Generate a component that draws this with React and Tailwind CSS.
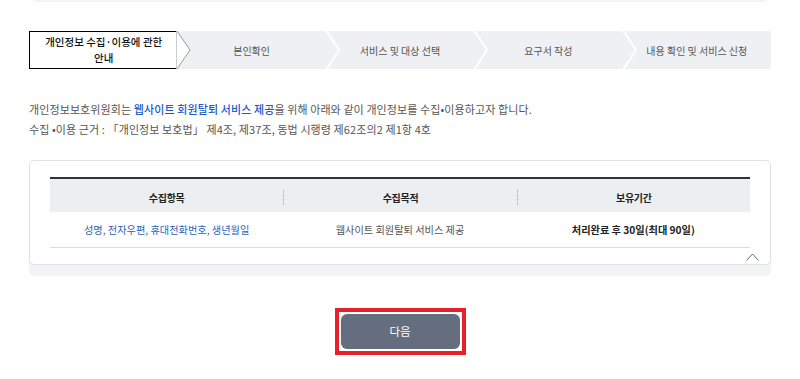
import React from 'react';

const steps = [
  '본인확인',
  '서비스 및 대상 선택',
  '요구서 작성',
  '내용 확인 및 서비스 신청',
];

const Chevron = ({ first }) => (
  <svg
    className="absolute left-[-1px] top-0 h-[38px] w-[16px] z-10"
    viewBox="0 0 16 38"
    fill="none"
  >
    {first ? (
      <polygon points="0,0 1,0 14,19 1,38 0,38" fill="#ffffff" stroke="#9a9a9a" strokeWidth="1" />
    ) : (
      <polyline points="1,-1 14,19 1,39" stroke="#ffffff" strokeWidth="2" />
    )}
  </svg>
);

export default function App() {
  return (
    <div
      className="w-[800px] h-[379px] bg-white overflow-hidden"
      style={{ fontFamily: '"Noto Sans CJK KR", "Noto Sans", sans-serif' }}
    >
      <div className="mx-[33px] h-[2px] bg-[#f3f4f5] rounded-b" />

      {/* Stepper */}
      <div className="mx-[29px] mt-[29px] grid grid-cols-5 h-[38px] bg-[#eef0f3] rounded-r-[2px]">
        <div className="flex items-center justify-center bg-white border-l border-y border-black text-[10.5px] leading-[16px] font-medium text-[#111] text-center">
          <div>
            개인정보 수집·이용에 관한
            <br />
            안내
          </div>
        </div>
        {steps.map((s, i) => (
          <div
            key={s}
            className="relative flex items-center justify-center text-[10px] text-[#555]"
          >
            <Chevron first={i === 0} />
            <span>{s}</span>
          </div>
        ))}
      </div>

      {/* Description */}
      <div className="mx-[29px] mt-[30px] text-[11px] leading-[20px] text-[#555] tracking-[0.1px]">
        <p>
          개인정보보호위원회는{' '}
          <span className="text-[#1a5cc8] font-medium">웹사이트 회원탈퇴 서비스 제공</span>을 위해 아래와 같이
          개인정보를 수집•이용하고자 합니다.
        </p>
        <p>수집 •이용 근거 : 「개인정보 보호법」 제4조, 제37조, 동법 시행령 제62조의2 제1항 4호</p>
      </div>

      {/* Table card */}
      <div className="mx-[29px] mt-[21px] bg-[#f2f3f4] rounded-[5px] pb-[11px]">
        <div className="bg-white border border-[#e2e2e2] rounded-[5px] px-[20px] pt-[16px] pb-[16px] relative">
          <div className="border-t-2 border-[#333]">
            <div className="grid grid-cols-3 h-[33px] bg-[#eceff2] text-[10px] tracking-[-0.3px] font-bold text-[#222]">
              <div className="flex items-center justify-center">수집항목</div>
              <div className="flex items-center justify-center border-l border-dashed border-[#bbb] my-[11px]">수집목적</div>
              <div className="flex items-center justify-center border-l border-dashed border-[#bbb] my-[11px]">보유기간</div>
            </div>
            <div className="grid grid-cols-3 h-[36px] border-b border-[#dddddd] text-[10.2px]">
              <div className="flex items-center justify-center text-[#2a63b8]">성명, 전자우편, 휴대전화번호, 생년월일</div>
              <div className="flex items-center justify-center text-[#555]">웹사이트 회원탈퇴 서비스 제공</div>
              <div className="flex items-center justify-center font-bold text-[#222]">처리완료 후 30일(최대 90일)</div>
            </div>
          </div>
          <svg
            className="absolute right-[11px] bottom-[3px] w-[13px] h-[8px]"
            viewBox="0 0 13 8"
            fill="none"
          >
            <polyline points="0.5,7.5 6.5,1 12.5,7.5" stroke="#5a6b85" strokeWidth="1" />
          </svg>
        </div>
      </div>

      {/* Next button */}
      <div className="mt-[32px] flex justify-center">
        <div className="border-[4px] border-[#e8202a] p-[2px] w-[131px] h-[47px]">
          <button className="w-full h-full rounded-[6px] bg-[#646e7e] text-white text-[11.5px]">다음</button>
        </div>
      </div>
    </div>
  );
}
